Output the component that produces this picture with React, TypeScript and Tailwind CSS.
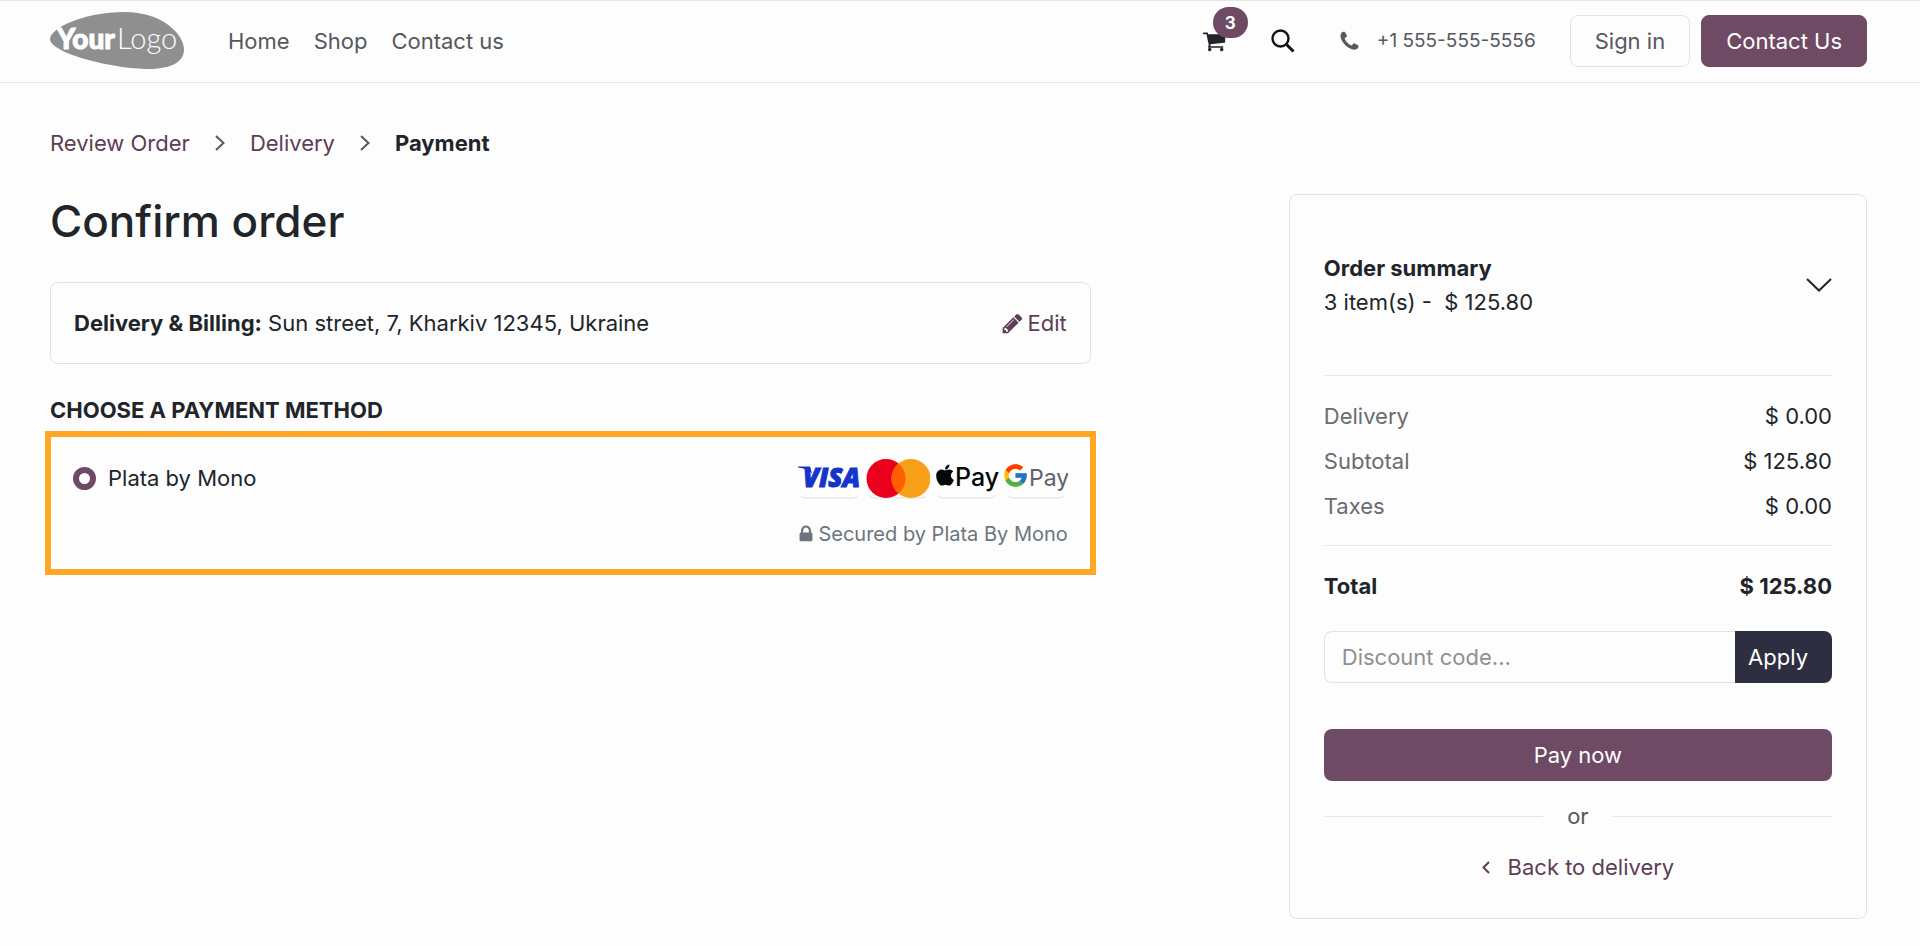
import { useState } from "react";
import type { ReactNode } from "react";
import { FaApple } from "react-icons/fa";
import { FcGoogle } from "react-icons/fc";

type IconProps = {
  className?: string;
};

const iconPaths = {
  cart: "M704 1536q0 52-38 90t-90 38-90-38-38-90 38-90 90-38 90 38 38 90zm896 0q0 52-38 90t-90 38-90-38-38-90 38-90 90-38 90 38 38 90zm128-1088v512q0 24-16.5 42.5t-40.5 21.5l-1044 122q13 60 13 70 0 16-24 64h920q26 0 45 19t19 45-19 45-45 19h-1024q-26 0-45-19t-19-45q0-11 8-31.5t16-36 21.5-40 15.5-29.5l-177-823h-204q-26 0-45-19t-19-45 19-45 45-19h256q16 0 28.5 6.5t19.5 15.5 13 24.5 8 26 5.5 29.5 4.5 26h1201q26 0 45 19t19 45z",
  phone: "M1600 1240q0 27-10 70.5t-21 68.5q-21 50-122 106-94 51-186 51-27 0-53-3.5t-57.5-12.5-47-14.5-55.5-20.5-49-18q-98-35-175-83-127-79-264-216t-216-264q-48-77-83-175-3-9-18-49t-20.5-55.5-14.5-47-12.5-57.5-3.5-53q0-92 51-186 56-101 106-122 25-11 68.5-21t70.5-10q14 0 21 3 18 6 53 76 11 19 30 54t35 63.5 31 53.5q3 4 17.5 25t21.5 35.5 7 28.5q0 20-28.5 50t-62 55-62 53-28.5 46q0 9 5 22.5t8.5 20.5 14 24 11.5 19q76 137 174 235t235 174q2 1 19 11.5t24 14 20.5 8.5 22.5 5q18 0 46-28.5t53-62 55-62 50-28.5q14 0 28.5 7t35.5 21.5 25 17.5q25 15 53.5 31t63.5 35 54 30q70 35 76 53 3 7 3 21z",
  pencil: "M491 1536l91-91-235-235-91 91v107h128v128h107zm523-928q0-22-22-22-10 0-17 7l-542 542q-7 7-7 17 0 22 22 22 10 0 17-7l542-542q7-7 7-17zm-54-192l416 416-832 832h-416v-416zm683 96q0 53-37 90l-166 166-416-416 166-165q36-38 90-38 53 0 91 38l235 234q37 39 37 91z",
  lock: "M640 768h512v-192q0-106-75-181t-181-75-181 75-75 181v192zm832 96v576q0 40-28 68t-68 28h-960q-40 0-68-28t-28-68v-576q0-40 28-68t68-28h32v-192q0-184 132-316t316-132 316 132 132 316v192h32q40 0 68 28t28 68z",
};

function Icon({ name, className }: IconProps & { name: keyof typeof iconPaths }) {
  return (
    <svg viewBox="0 0 1792 1792" fill="currentColor" className={className} aria-hidden="true">
      <path d={iconPaths[name]} />
    </svg>
  );
}

function ChevronRight() {
  return (
    <svg width="12" height="16" viewBox="0 0 12 16" fill="none" stroke="#55585c" strokeWidth="2" aria-hidden="true">
      <path d="M2 1l7.5 7L2 15" />
    </svg>
  );
}

function Logo() {
  return (
    <svg width="135" height="58" viewBox="0 0 135 58" role="img" aria-label="Your Logo">
      <path
        d="M0 27C0 17 32 0 75 0C112 0 134 22 134 38C134 51 118 57 99 57C62 57 0 41 0 27Z"
        fill="#8f8f8f"
      />
      <text x="7" y="37" fill="#fff" stroke="#fff" strokeWidth="1" className="font-['Lato',sans-serif] text-[28px] font-black">Your</text>
      <text x="67" y="37" fill="#fff" className="font-['Lato',sans-serif] text-[29px] font-light">Logo</text>
    </svg>
  );
}

function PaymentMark({ label, children }: { label: string; children: ReactNode }) {
  return (
    <svg width="64" height="42" viewBox="0 0 64 42" role="img" aria-label={label}>
      <path d="M4 39q1 2 5 2h46q4 0 5-2" fill="none" stroke="#dedede" />
      {children}
    </svg>
  );
}

function PaymentMarks() {
  return (
    <div className="flex gap-[5px]">
      <PaymentMark label="Visa">
        <path d="M1 9.5h12l2 7q-5-5-14-6z" fill="#1434cb" />
        <text x="6" y="30" fill="#1434cb" stroke="#1434cb" strokeWidth="1" className="font-['Open_Sans',sans-serif] text-[26px] font-extrabold italic">VISA</text>
      </PaymentMark>

      <PaymentMark label="Mastercard">
        <circle cx="20" cy="21.5" r="19.5" fill="#eb001b" />
        <circle cx="45" cy="21.5" r="19.5" fill="#f9a01b" />
        <path d="M32.5 6.5a19.5 19.5 0 0 1 0 30a19.5 19.5 0 0 1 0-30z" fill="#ff5f00" />
      </PaymentMark>

      <PaymentMark label="Apple Pay">
        <FaApple x="-2" y="6" size={24} color="#050708" />
        <text x="20" y="29" fill="#050708" className="font-['Inter',sans-serif] text-[25px] font-medium">Pay</text>
      </PaymentMark>

      <PaymentMark label="Google Pay">
        <FcGoogle x="-2" y="5" size={27} />
        <text x="25" y="29" fill="#5f6368" className="font-['Inter',sans-serif] text-[23px]">Pay</text>
      </PaymentMark>
    </div>
  );
}

function Header() {
  return (
    <header className="flex h-[83px] items-center justify-between border-y border-[#e6e6e6] pr-[53px] pb-px pl-[50px]">
      <div className="flex items-center">
        <a href="#home">
          <Logo />
        </a>
        <nav className="ml-[43px] flex gap-6">
          <a href="#home">Home</a>
          <a href="#shop">Shop</a>
          <a href="#contact">Contact us</a>
        </nav>
      </div>

      <div className="flex items-center">
        <a href="#cart" aria-label="Cart" className="relative mr-[45px] text-[#212529]">
          <Icon name="cart" className="size-6" />
          <span className="absolute -top-[22px] left-[11px] flex h-[31px] w-[35px] items-center justify-center rounded-full bg-[#6f4a65] text-[17px] font-bold text-white">
            3
          </span>
        </a>
        <button type="button" aria-label="Search" className="mr-[43px] text-[#111418]">
          <svg width="24" height="24" viewBox="0 0 24 24" fill="none" stroke="currentColor" aria-hidden="true">
            <circle cx="9.5" cy="9.5" r="8" strokeWidth="2.4" />
            <path d="M15.5 15.5l7 7" strokeWidth="3" />
          </svg>
        </button>
        <a href="tel:+15555555556" className="mr-[34px] flex items-center gap-4 text-[19px]">
          <Icon name="phone" className="size-[23px]" />
          +1 555-555-5556
        </a>
        <a href="#login" className="mr-[11px] rounded-lg border border-[#e2e2e2] px-6 py-[8px]">
          Sign in
        </a>
        <a href="#contact" className="rounded-lg border border-[#6f4a65] bg-[#6f4a65] px-6 py-[8px] text-white">
          Contact Us
        </a>
      </div>
    </header>
  );
}

function OrderSummary() {
  const [code, setCode] = useState("");

  const rows = [
    { label: "Delivery", value: "$ 0.00", pad: "pt-[23px] pb-[5px]" },
    { label: "Subtotal", value: "$ 125.80", pad: "py-[5px]" },
    { label: "Taxes", value: "$ 0.00", pad: "pt-[5px] pb-[21px]" },
  ];

  return (
    <aside className="rounded-lg border border-[#e2e2e2] px-[34px] pb-[34px]">
      <button type="button" className="flex w-full items-center justify-between py-[56px] text-left text-[#212529]">
        <span>
          <span className="block font-bold">Order summary</span>
          <span className="block whitespace-pre">3 item(s) -  $ 125.80</span>
        </span>
        <svg width="26" height="14" viewBox="0 0 26 14" fill="none" stroke="currentColor" strokeWidth="2" aria-hidden="true">
          <path d="M1 1l12 11.5L25 1" />
        </svg>
      </button>

      <table className="w-full border-collapse leading-[35px]">
        <tbody className="border-t border-[#e6e6e6]">
          {rows.map((row) => (
            <tr key={row.label}>
              <th scope="row" className={`text-left font-normal text-[#696c70] ${row.pad}`}>{row.label}</th>
              <td className={`text-right text-[#212529] ${row.pad}`}>{row.value}</td>
            </tr>
          ))}
        </tbody>
        <tfoot className="border-t border-[#e6e6e6] font-bold text-[#212529]">
          <tr>
            <th scope="row" className="pt-[23px] pb-[5px] text-left">Total</th>
            <td className="pt-[23px] pb-[5px] text-right">$ 125.80</td>
          </tr>
        </tfoot>
      </table>

      <form className="mt-[22px] flex" onSubmit={(e) => e.preventDefault()}>
        <input
          type="text"
          aria-label="Discount code"
          placeholder="Discount code..."
          value={code}
          onChange={(e) => setCode(e.target.value)}
          className="h-[52px] min-w-0 flex-1 rounded-l-lg border border-r-0 border-[#e2e2e2] px-[17px] placeholder:text-[#8e9093]"
        />
        <button type="submit" className="rounded-r-lg bg-[#2d2f41] pr-6 pl-[13px] text-white">
          Apply
        </button>
      </form>

      <button type="button" className="mt-[46px] h-[52px] w-full rounded-lg bg-[#6f4a65] text-white">
        Pay now
      </button>

      <div className="mt-[18px] flex items-center gap-6">
        <span className="h-px flex-1 bg-[#e6e6e6]" />
        or
        <span className="h-px flex-1 bg-[#e6e6e6]" />
      </div>

      <a href="#delivery" className="mt-[17px] flex items-center justify-center gap-[17px] text-[#5d3e55]">
        <svg width="9" height="13" viewBox="0 0 9 13" fill="none" stroke="currentColor" strokeWidth="2" aria-hidden="true">
          <path d="M7 1L1.5 6.5L7 12" />
        </svg>
        Back to delivery
      </a>
    </aside>
  );
}

export default function App() {
  return (
    <div className="min-h-screen bg-[#fdfdfd] font-['Inter',sans-serif] text-[22px] leading-[34px] text-[#55585c]">
      <Header />

      <main className="pt-[43px] pr-[53px] pb-[28px] pl-[50px]">
        {/* Checkout steps */}
        <ol className="flex items-center gap-6">
          <li><a href="#review" className="text-[#5d3e55]">Review Order</a></li>
          <li><ChevronRight /></li>
          <li><a href="#delivery" className="text-[#5d3e55]">Delivery</a></li>
          <li><ChevronRight /></li>
          <li className="font-bold text-[#212529]">Payment</li>
        </ol>

        <div className="mt-[34px] grid grid-cols-[9fr_5fr] items-start gap-x-[198px]">
          <section className="text-[#212529]">
            <h1 className="text-[44px] leading-[54px] font-medium">Confirm order</h1>

            {/* Address */}
            <div className="mt-[34px] flex items-center justify-between rounded-lg border border-[#e2e2e2] px-[23px] py-[23px]">
              <p>
                <b>Delivery &amp; Billing:</b> Sun street, 7, Kharkiv 12345, Ukraine
              </p>
              <a href="#address" className="flex items-center gap-1 text-[#5d3e55]">
                <Icon name="pencil" className="size-[23px]" />
                Edit
              </a>
            </div>

            <h2 className="mt-[33px] leading-[26px] font-bold uppercase">Choose a payment method</h2>

            {/* Payment methods */}
            <div className="-mx-[5px] mt-[8px] flex items-start justify-between border-6 border-[#ffa722] px-[22px] py-[20px]">
              <label className="flex h-[42px] items-center gap-3">
                <input
                  type="radio"
                  name="payment"
                  defaultChecked
                  className="size-[23px] appearance-none rounded-full border-6 border-[#6f4a65] bg-white"
                />
                Plata by Mono
              </label>
              <div className="flex flex-col items-end gap-5">
                <PaymentMarks />
                <p className="flex items-center gap-0.5 text-xl leading-[30px] text-[#6c757d]">
                  <Icon name="lock" className="size-[20px]" />
                  Secured by Plata By Mono
                </p>
              </div>
            </div>
          </section>

          <OrderSummary />
        </div>
      </main>
    </div>
  );
}
